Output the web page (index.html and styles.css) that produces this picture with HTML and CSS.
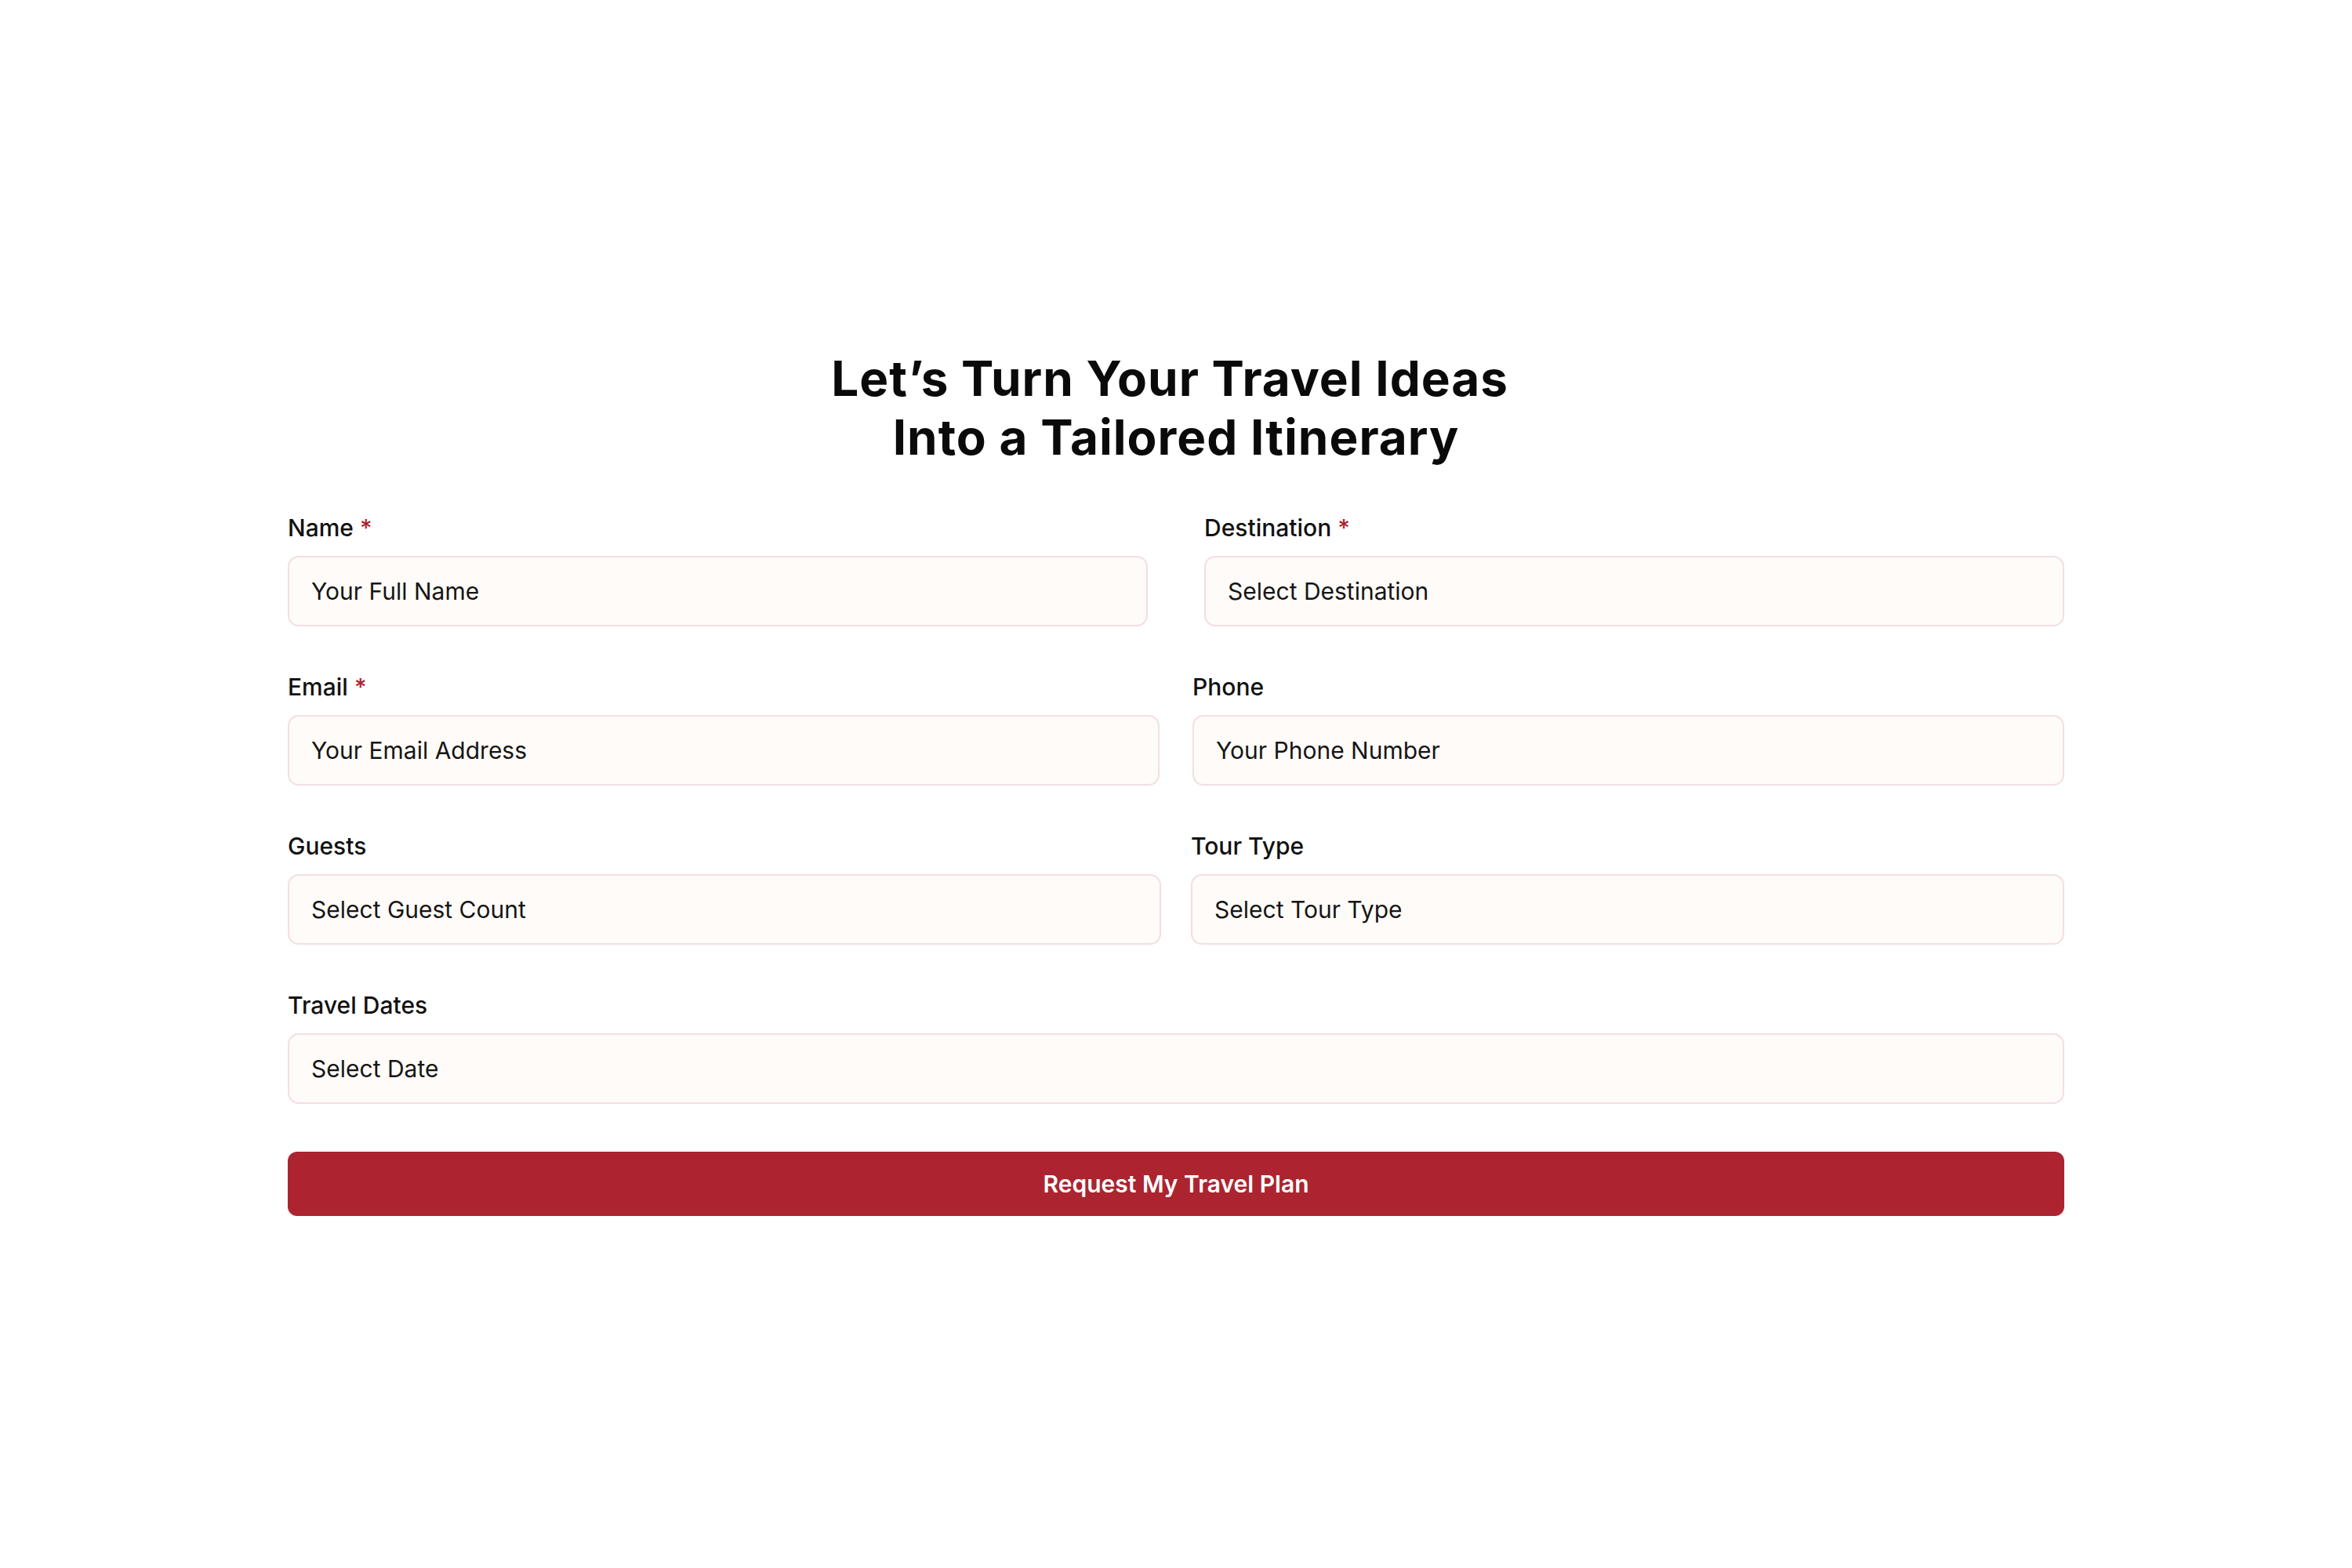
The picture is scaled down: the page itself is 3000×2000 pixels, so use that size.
FILE: index.html
```html
<!DOCTYPE html>
<html lang="en">
<head>
<meta charset="utf-8">
<title>Travel Plan Request</title>
<link rel="stylesheet" href="styles.css">
</head>
<body>
<main class="page">
  <h1 class="title">Let’s Turn Your Travel Ideas&nbsp;<br>Into a Tailored Itinerary</h1>
  <form class="form">
    <div class="row row-a">
      <div class="field">
        <label class="label">Name <span class="req">*</span></label>
        <div class="input">Your Full Name</div>
      </div>
      <div class="field">
        <label class="label">Destination <span class="req">*</span></label>
        <div class="input">Select Destination</div>
      </div>
    </div>
    <div class="row row-b">
      <div class="field">
        <label class="label">Email <span class="req">*</span></label>
        <div class="input">Your Email Address</div>
      </div>
      <div class="field">
        <label class="label">Phone</label>
        <div class="input">Your Phone Number</div>
      </div>
    </div>
    <div class="row row-c">
      <div class="field">
        <label class="label">Guests</label>
        <div class="input">Select Guest Count</div>
      </div>
      <div class="field">
        <label class="label">Tour Type</label>
        <div class="input">Select Tour Type</div>
      </div>
    </div>
    <div class="row row-full">
      <div class="field">
        <label class="label">Travel Dates</label>
        <div class="input">Select Date</div>
      </div>
    </div>
    <button type="button" class="submit">Request My Travel Plan</button>
  </form>
</main>
</body>
</html>
```

FILE: styles.css
```css
html, body {
  margin: 0;
  padding: 0;
  background: #ffffff;
}

body {
  font-family: Inter, "Noto Sans", sans-serif;
  color: #111111;
}

.page {
  width: 2266px;
  margin: 0 auto;
  padding-top: 445px;
}

.title {
  margin: 0;
  text-align: center;
  font-size: 62px;
  line-height: 75px;
  font-weight: 700;
  letter-spacing: 1px;
  color: #0a0a0a;
}

.form {
  display: flex;
  flex-direction: column;
  gap: 58px;
  margin-top: 59px;
}

.row {
  display: grid;
  grid-template-columns: 1fr 1fr;
}

.row-a { column-gap: 72px; }
.row-b { column-gap: 42px; }
.row-c { column-gap: 38px; }
.row-full { grid-template-columns: 1fr; }

.field {
  display: flex;
  flex-direction: column;
  gap: 16px;
}

.label {
  font-size: 30px;
  line-height: 39px;
  font-weight: 500;
  color: #111111;
}

.req {
  color: #b0232f;
}

.input {
  box-sizing: border-box;
  height: 90px;
  display: flex;
  align-items: center;
  padding: 0 28px;
  background: #fffbf8;
  border: 2px solid #f2dfe2;
  border-radius: 14px;
  font-size: 30px;
  color: #151515;
}

.submit {
  margin-top: 3px;
  height: 82px;
  border: none;
  border-radius: 12px;
  background: #ac2430;
  color: #ffffff;
  font-family: Inter, "Noto Sans", sans-serif;
  font-size: 30px;
  font-weight: 600;
  cursor: pointer;
}
```
